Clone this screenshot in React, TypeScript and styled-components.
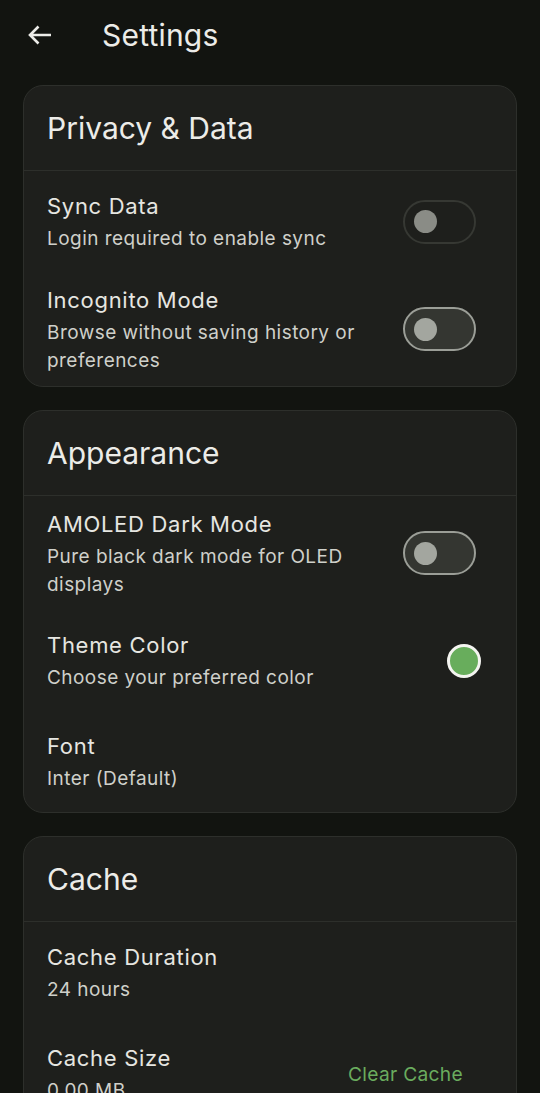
import React from "react";
import styled, { createGlobalStyle } from "styled-components";

const GlobalStyle = createGlobalStyle`
  html, body {
    margin: 0;
    padding: 0;
    background: #121410;
  }
  body {
    font-family: Inter, "Noto Sans", sans-serif;
    color: #e3e3de;
    -webkit-font-smoothing: antialiased;
  }
  * { box-sizing: border-box; }
`;

const Page = styled.div`
  width: 540px;
  min-height: 1093px;
  background: #121410;
  overflow: hidden;
`;

const TopBar = styled.header`
  height: 70px;
  display: flex;
  align-items: center;
  padding-left: 16px;
`;

const BackButton = styled.button`
  width: 48px;
  height: 48px;
  border: none;
  background: transparent;
  padding: 0;
  display: flex;
  align-items: center;
  justify-content: center;
  color: #ecece8;
  cursor: pointer;
`;

const PageTitle = styled.h1`
  margin: 0 0 0 38px;
  font-size: 30px;
  font-weight: 400;
  letter-spacing: 0.2px;
  color: #ecece8;
`;

const Content = styled.main`
  display: flex;
  flex-direction: column;
  gap: 23px;
  padding: 15px 23px 24px;
`;

const Card = styled.section`
  background: #1e1f1c;
  border: 1px solid #2d2f2b;
  border-radius: 20px;
  overflow: hidden;
`;

const CardHeader = styled.h2`
  margin: 0;
  padding: 24px 23px 24px;
  line-height: 36px;
  font-size: 30px;
  font-weight: 400;
  color: #ecece8;
  border-bottom: 1px solid #2d2f2b;
`;

const Row = styled.div`
  min-height: 101px;
  padding: 12px 0 12px 23px;
  display: flex;
  align-items: center;
  gap: 24px;
`;

const TextBlock = styled.div`
  flex: 1;
  display: flex;
  flex-direction: column;
`;

const RowTitle = styled.div`
  font-size: 22px;
  line-height: 33px;
  letter-spacing: 0.7px;
  color: #e6e6e1;
`;

const RowSub = styled.div`
  margin-top: 2px;
  font-size: 19px;
  line-height: 27.5px;
  letter-spacing: 0.45px;
  color: #cfd0ca;
`;

const Control = styled.div<{ $right: number }>`
  flex-shrink: 0;
  display: flex;
  align-items: center;
  padding-right: ${(p) => p.$right}px;
`;

const SwitchTrack = styled.div<{ $enabled: boolean }>`
  width: 73px;
  height: 44px;
  border-radius: 22px;
  border: 2.75px solid ${(p) => (p.$enabled ? "#9b9e97" : "#363833")};
  background: ${(p) => (p.$enabled ? "#343631" : "transparent")};
  display: flex;
  align-items: center;
  padding-left: 9px;
`;

const SwitchThumb = styled.div<{ $enabled: boolean }>`
  width: 23px;
  height: 23px;
  border-radius: 50%;
  background: ${(p) => (p.$enabled ? "#a3a69f" : "#8a8c86")};
`;

const ColorSwatch = styled.div`
  width: 34px;
  height: 34px;
  border-radius: 50%;
  background: #68ad5c;
  border: 3px solid #f4f4f0;
`;

const TextButton = styled.button`
  border: none;
  background: transparent;
  padding: 10px 16px;
  font-family: Inter, "Noto Sans", sans-serif;
  font-size: 19.2px;
  letter-spacing: 0.3px;
  color: #6aac5e;
  cursor: pointer;
`;

const ArrowBack = () => (
  <svg width="24" height="20" viewBox="0 0 24 20" fill="none">
    <path
      d="M23 10H2.5M10.5 1.5L2 10l8.5 8.5"
      stroke="currentColor"
      strokeWidth="2.6"
      strokeLinecap="butt"
      strokeLinejoin="miter"
    />
  </svg>
);

const Switch = ({ enabled }: { enabled: boolean }) => (
  <SwitchTrack $enabled={enabled}>
    <SwitchThumb $enabled={enabled} />
  </SwitchTrack>
);

type Item = {
  title: string;
  sub: string;
  control?: React.ReactNode;
  right?: number;
};

const SettingRow = ({ title, sub, control, right = 0 }: Item) => (
  <Row>
    <TextBlock>
      <RowTitle>{title}</RowTitle>
      <RowSub>{sub}</RowSub>
    </TextBlock>
    {control && <Control $right={right}>{control}</Control>}
  </Row>
);

const sections: { title: string; items: Item[] }[] = [
  {
    title: "Privacy & Data",
    items: [
      {
        title: "Sync Data",
        sub: "Login required to enable sync",
        control: <Switch enabled={false} />,
        right: 40,
      },
      {
        title: "Incognito Mode",
        sub: "Browse without saving history or preferences",
        control: <Switch enabled={true} />,
        right: 40,
      },
    ],
  },
  {
    title: "Appearance",
    items: [
      {
        title: "AMOLED Dark Mode",
        sub: "Pure black dark mode for OLED displays",
        control: <Switch enabled={true} />,
        right: 40,
      },
      {
        title: "Theme Color",
        sub: "Choose your preferred color",
        control: <ColorSwatch />,
        right: 35,
      },
      { title: "Font", sub: "Inter (Default)" },
    ],
  },
  {
    title: "Cache",
    items: [
      { title: "Cache Duration", sub: "24 hours" },
      {
        title: "Cache Size",
        sub: "0.00 MB",
        control: <TextButton>Clear Cache</TextButton>,
        right: 37,
      },
    ],
  },
];

export default function App() {
  return (
    <>
      <GlobalStyle />
      <Page>
        <TopBar>
          <BackButton aria-label="Back">
            <ArrowBack />
          </BackButton>
          <PageTitle>Settings</PageTitle>
        </TopBar>
        <Content>
          {sections.map((s) => (
            <Card key={s.title}>
              <CardHeader>{s.title}</CardHeader>
              {s.items.map((it) => (
                <SettingRow key={it.title} {...it} />
              ))}
            </Card>
          ))}
        </Content>
      </Page>
    </>
  );
}
